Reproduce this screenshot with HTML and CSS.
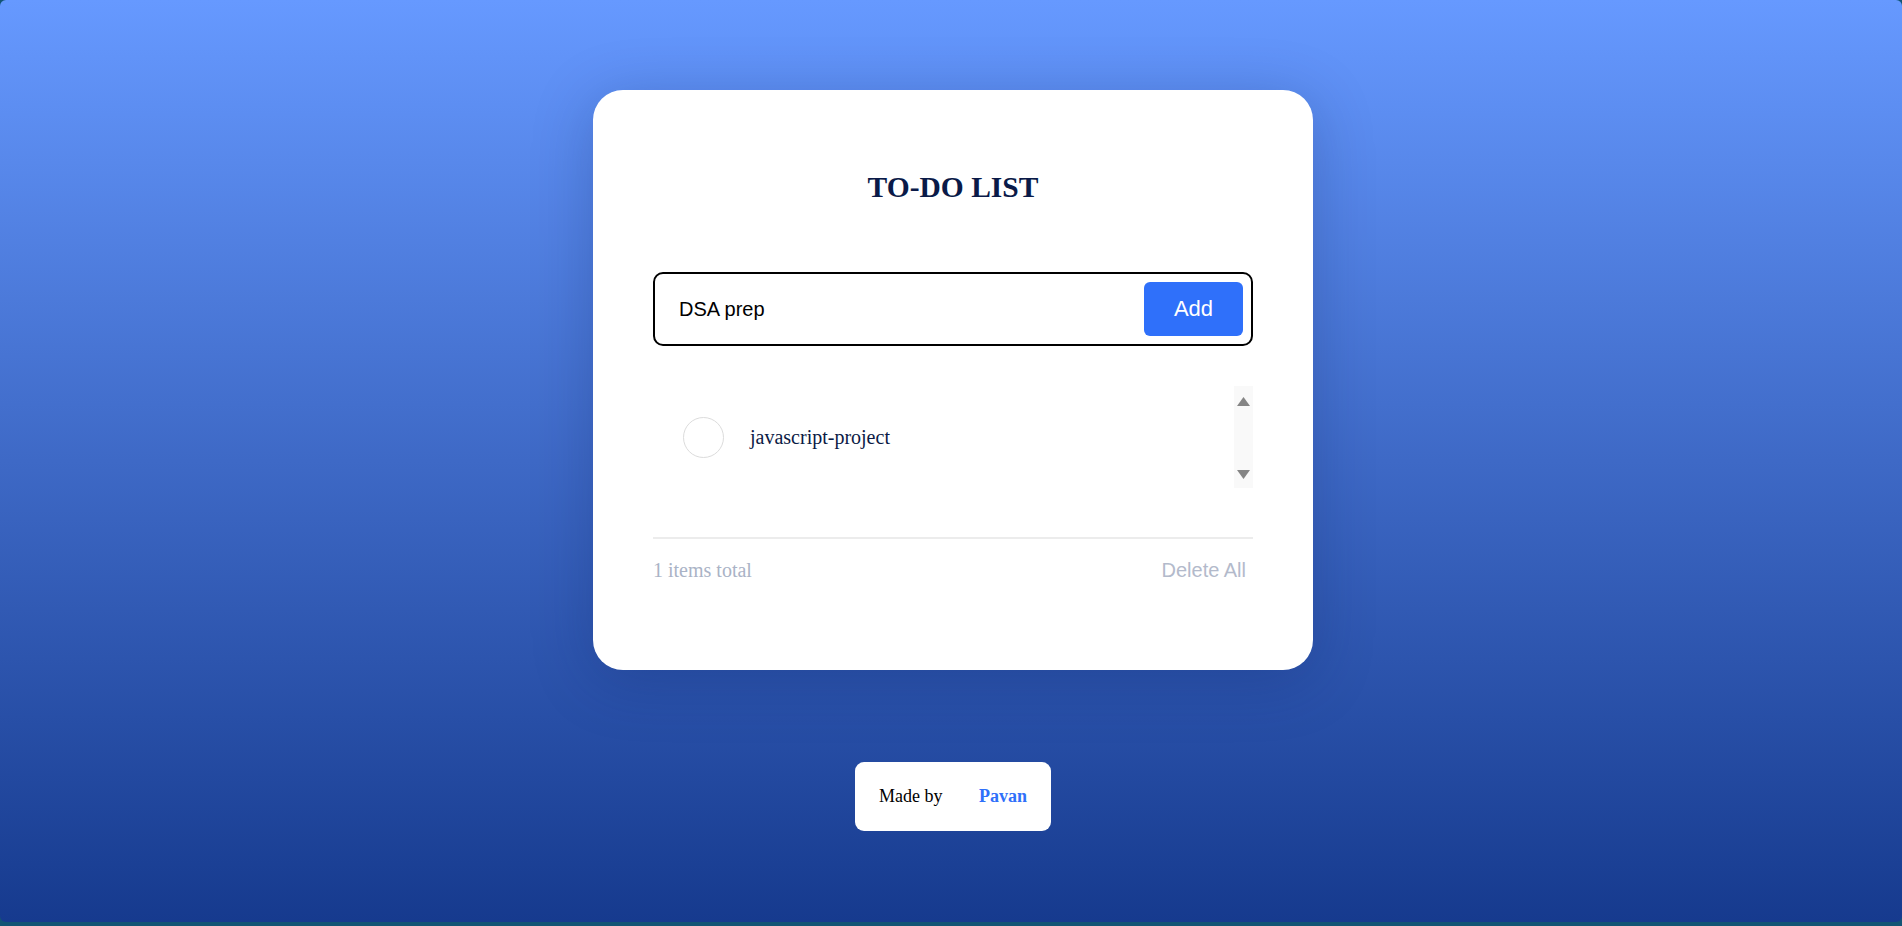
FILE: index.html
```html
<!DOCTYPE html>
<html lang="en">
<head>
<meta charset="utf-8">
<title>To-Do List</title>
<link rel="stylesheet" href="styles.css">
</head>
<body>
<div class="page">
  <main class="card">
    <h1 class="title">TO-DO LIST</h1>
    <form class="entry">
      <input class="entry-input" type="text" value="DSA prep">
      <button class="entry-add" type="button">Add</button>
    </form>
    <div class="list-box">
      <ul class="list">
        <li class="item">
          <span class="item-check"></span>
          <span class="item-text">javascript-project</span>
        </li>
      </ul>
      <div class="scrollbar" aria-hidden="true">
        <svg class="scroll-arrow" width="13" height="9" viewBox="0 0 13 9"><polygon points="6.5,0 13,9 0,9" fill="#858585"/></svg>
        <svg class="scroll-arrow" width="13" height="9" viewBox="0 0 13 9"><polygon points="0,0 13,0 6.5,9" fill="#858585"/></svg>
      </div>
    </div>
    <div class="divider"></div>
    <div class="summary">
      <span class="summary-count">1 items total</span>
      <button class="summary-clear" type="button">Delete All</button>
    </div>
  </main>
  <footer class="credit">
    <span class="credit-label">Made by</span>
    <span class="credit-name">Pavan</span>
  </footer>
</div>
</body>
</html>
```

FILE: styles.css
```css
html {
  background: #125474;
}
body {
  margin: 0;
  font-family: "Liberation Serif", "Times New Roman", serif;
}
.page {
  height: 922px;
  border-radius: 6px;
  background: linear-gradient(180deg, #6699ff 0%, #3e69c6 50%, #163a8e 100%);
  display: flex;
  flex-direction: column;
  align-items: center;
  padding: 90px 0 0 4px;
  box-sizing: border-box;
}
.card {
  width: 720px;
  height: 580px;
  box-sizing: border-box;
  padding: 80px 60px 80px;
  background: #ffffff;
  border-radius: 30px;
  box-shadow: 0 10px 60px rgba(10, 30, 90, 0.25);
  display: flex;
  flex-direction: column;
}
.title {
  margin: 0;
  font-size: 29.5px;
  line-height: 34px;
  font-weight: bold;
  text-align: center;
  color: #0a1a48;
}
.entry {
  margin: 68px 0 0;
  height: 74px;
  box-sizing: border-box;
  border: 2px solid #000000;
  border-radius: 10px;
  padding: 8px;
  display: flex;
  align-items: center;
}
.entry-input {
  flex: 1;
  border: none;
  outline: none;
  background: transparent;
  padding: 0 0 0 16px;
  font-family: "Liberation Sans", Arial, sans-serif;
  font-size: 20px;
  color: #000000;
}
.entry-add {
  width: 99px;
  height: 54px;
  border: none;
  border-radius: 6px;
  background: #2f70fa;
  color: #ffffff;
  font-family: "Liberation Sans", Arial, sans-serif;
  font-size: 22px;
  padding: 0;
}
.list-box {
  margin-top: 40px;
  height: 102px;
  display: flex;
}
.list {
  flex: 1;
  list-style: none;
  margin: 0;
  padding: 0;
}
.item {
  height: 102px;
  display: flex;
  align-items: center;
  padding: 0 30px;
  gap: 26px;
}
.item-check {
  width: 39px;
  height: 39px;
  border: 1px solid #dcdcdc;
  border-radius: 50%;
  flex: none;
}
.item-text {
  font-size: 20px;
  color: #0b1a45;
}
.scrollbar {
  width: 19px;
  background: #f9f9f9;
  display: flex;
  flex-direction: column;
  align-items: center;
  justify-content: space-between;
  padding: 11px 0 9px;
  box-sizing: border-box;
}
.scroll-arrow {
  display: block;
}
.divider {
  margin-top: 49px;
  height: 2px;
  background: #ececec;
}
.summary {
  margin-top: 11px;
  height: 40px;
  display: flex;
  align-items: center;
  justify-content: space-between;
}
.summary-count {
  font-size: 20px;
  color: #aab3c6;
}
.summary-clear {
  border: none;
  background: transparent;
  padding: 0 7px;
  font-family: "Liberation Sans", Arial, sans-serif;
  font-size: 20px;
  color: #b3bacb;
}
.credit {
  margin-top: 92px;
  width: 196px;
  height: 69px;
  box-sizing: border-box;
  padding: 0 24px;
  background: #ffffff;
  border-radius: 9px;
  display: flex;
  align-items: center;
  justify-content: space-between;
  font-size: 18px;
}
.credit-label {
  color: #000000;
}
.credit-name {
  color: #2f70fa;
  font-weight: bold;
}
```
